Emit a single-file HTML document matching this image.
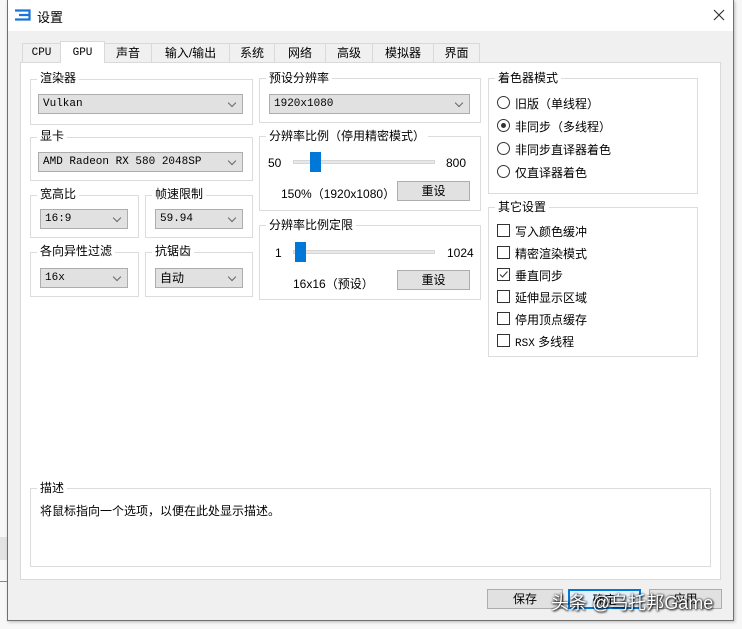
<!DOCTYPE html>
<html><head><meta charset="utf-8">
<style>
*{box-sizing:border-box;margin:0;padding:0}
body{width:742px;height:629px;overflow:hidden;background:#f7f7f7;font-family:"Liberation Sans","Noto Sans CJK SC",sans-serif;font-size:12px;color:#000;position:relative}
.a{position:absolute}
.win{left:7px;top:0;width:727px;height:621px;background:#f0f0f0;border:1px solid #707070;border-top:none;box-shadow:1px 1px 3px rgba(0,0,0,.25)}
.title{left:8px;top:0;width:725px;height:31px;background:#fff}
.panel{left:20px;top:62px;width:701px;height:518px;background:#fff;border:1px solid #d9d9d9}
.tab{top:43px;height:20px;background:#f0f0f0;border:1px solid #d9d9d9;border-bottom:none;text-align:center;line-height:18px;font-size:12px}
.tab.sel{top:41px;height:22px;background:#fff;z-index:2}
.gb{border:1px solid #dcdcdc}
.lbl{background:#fff;padding:0 3px;line-height:14px}
.cb{height:20px;background:#e1e1e1;border:1px solid #adadad;font-family:"Liberation Mono","Noto Sans CJK SC",monospace;font-size:11px;line-height:18px;padding-left:4px}
.cb.cjk{font-family:"Liberation Sans","Noto Sans CJK SC",sans-serif;font-size:12px}
.cb:after{content:"";position:absolute;right:7px;top:5px;width:5px;height:5px;border-right:1px solid #666;border-bottom:1px solid #666;transform:rotate(45deg)}
.btn{height:20px;background:#e1e1e1;border:1px solid #adadad;text-align:center;line-height:18px}
.track{height:4px;background:#e7e7e7;border:1px solid #d6d6d6}
.thumb{width:11px;height:20px;background:#0078d7}
.rad{width:13px;height:13px;border:1px solid #333;border-radius:50%;background:#fff}
.chk{width:13px;height:13px;border:1px solid #333;background:#fff}
</style></head><body>
<div class="a" style="left:0;top:537px;width:8px;height:23px;background:#e3e3e3"></div>
<div class="a" style="left:0;top:581px;width:8px;height:1px;background:#888"></div>
<div class="a win"></div>
<div class="a title"></div>
<svg class="a" style="left:14px;top:9px" width="18" height="12"><path d="M1 1.5H15.5V10.5H1M5 6H15" stroke="#1a73d9" stroke-width="2.2" fill="none"/></svg>
<div class="a" style="left:37px;top:7px;font-size:13px">设置</div>
<svg class="a" style="left:713px;top:9px" width="12" height="12"><path d="M1 1L11 11M11 1L1 11" stroke="#333" stroke-width="1.2"/></svg>

<div class="a tab" style="left:22px;width:39px;font-family:'Liberation Mono',monospace;font-size:11px">CPU</div>
<div class="a tab sel" style="left:60px;width:45px;font-family:'Liberation Mono',monospace;font-size:11px;line-height:22px">GPU</div>
<div class="a tab" style="left:104px;width:48px">声音</div>
<div class="a tab" style="left:151px;width:79px">输入/输出</div>
<div class="a tab" style="left:229px;width:46px">系统</div>
<div class="a tab" style="left:274px;width:52px">网络</div>
<div class="a tab" style="left:325px;width:48px">高级</div>
<div class="a tab" style="left:372px;width:62px">模拟器</div>
<div class="a tab" style="left:433px;width:47px">界面</div>
<div class="a panel"></div>

<!-- left column -->
<div class="a gb" style="left:30px;top:79px;width:223px;height:46px"></div>
<div class="a lbl" style="left:37px;top:71px">渲染器</div>
<div class="a cb" style="left:38px;top:94px;width:205px">Vulkan</div>

<div class="a gb" style="left:30px;top:137px;width:223px;height:44px"></div>
<div class="a lbl" style="left:37px;top:129px">显卡</div>
<div class="a cb" style="left:38px;top:152px;width:205px">AMD Radeon RX 580 2048SP</div>

<div class="a gb" style="left:30px;top:195px;width:109px;height:43px"></div>
<div class="a lbl" style="left:37px;top:187px">宽高比</div>
<div class="a cb" style="left:40px;top:209px;width:88px">16:9</div>
<div class="a gb" style="left:145px;top:195px;width:108px;height:43px"></div>
<div class="a lbl" style="left:152px;top:187px">帧速限制</div>
<div class="a cb" style="left:155px;top:209px;width:88px">59.94</div>

<div class="a gb" style="left:30px;top:252px;width:109px;height:45px"></div>
<div class="a lbl" style="left:37px;top:244px">各向异性过滤</div>
<div class="a cb" style="left:40px;top:268px;width:88px">16x</div>
<div class="a gb" style="left:145px;top:252px;width:108px;height:45px"></div>
<div class="a lbl" style="left:152px;top:244px">抗锯齿</div>
<div class="a cb cjk" style="left:155px;top:268px;width:88px">自动</div>

<!-- middle -->
<div class="a gb" style="left:259px;top:78px;width:222px;height:45px"></div>
<div class="a lbl" style="left:266px;top:71px">预设分辨率</div>
<div class="a cb" style="left:269px;top:94px;width:201px">1920x1080</div>

<div class="a gb" style="left:259px;top:136px;width:222px;height:75px"></div>
<div class="a lbl" style="left:266px;top:129px">分辨率比例（停用精密模式）</div>
<div class="a" style="left:268px;top:156px">50</div>
<div class="a track" style="left:293px;top:160px;width:142px"></div>
<div class="a thumb" style="left:310px;top:152px"></div>
<div class="a" style="left:446px;top:156px">800</div>
<div class="a" style="left:281px;top:185px">150%（1920x1080）</div>
<div class="a btn" style="left:397px;top:181px;width:73px">重设</div>

<div class="a gb" style="left:259px;top:225px;width:222px;height:75px"></div>
<div class="a lbl" style="left:266px;top:218px">分辨率比例定限</div>
<div class="a" style="left:275px;top:246px">1</div>
<div class="a track" style="left:293px;top:250px;width:142px"></div>
<div class="a thumb" style="left:295px;top:242px"></div>
<div class="a" style="left:447px;top:246px">1024</div>
<div class="a" style="left:293px;top:275px">16x16（预设）</div>
<div class="a btn" style="left:397px;top:270px;width:73px">重设</div>

<!-- right -->
<div class="a gb" style="left:488px;top:78px;width:210px;height:116px"></div>
<div class="a lbl" style="left:495px;top:71px">着色器模式</div>
<div class="a rad" style="left:497px;top:96px"></div><div class="a" style="left:515px;top:95px">旧版（单线程）</div>
<div class="a rad" style="left:497px;top:119px"></div><div class="a" style="left:501px;top:123px;width:5px;height:5px;border-radius:50%;background:#333"></div><div class="a" style="left:515px;top:118px">非同步（多线程）</div>
<div class="a rad" style="left:497px;top:142px"></div><div class="a" style="left:515px;top:141px">非同步直译器着色</div>
<div class="a rad" style="left:497px;top:165px"></div><div class="a" style="left:515px;top:164px">仅直译器着色</div>

<div class="a gb" style="left:488px;top:207px;width:210px;height:150px"></div>
<div class="a lbl" style="left:495px;top:200px">其它设置</div>
<div class="a chk" style="left:497px;top:224px"></div><div class="a" style="left:515px;top:223px">写入颜色缓冲</div>
<div class="a chk" style="left:497px;top:246px"></div><div class="a" style="left:515px;top:245px">精密渲染模式</div>
<div class="a chk" style="left:497px;top:268px"></div><svg class="a" style="left:497px;top:268px" width="13" height="13"><path d="M3 6.5L5.5 9L10.5 3.5" stroke="#333" fill="none"/></svg><div class="a" style="left:515px;top:267px">垂直同步</div>
<div class="a chk" style="left:497px;top:290px"></div><div class="a" style="left:515px;top:289px">延伸显示区域</div>
<div class="a chk" style="left:497px;top:312px"></div><div class="a" style="left:515px;top:311px">停用顶点缓存</div>
<div class="a chk" style="left:497px;top:334px"></div><div class="a" style="left:515px;top:333px"><span style="font-family:'Liberation Mono',monospace;font-size:11px">RSX</span> 多线程</div>

<!-- description -->
<div class="a gb" style="left:30px;top:488px;width:681px;height:79px"></div>
<div class="a lbl" style="left:37px;top:481px">描述</div>
<div class="a" style="left:40px;top:502px">将鼠标指向一个选项，以便在此处显示描述。</div>

<!-- bottom buttons -->
<div class="a btn" style="left:487px;top:589px;width:76px">保存</div>
<div class="a btn" style="left:568px;top:589px;width:73px;border:2px solid #0078d7;background:#e5f1fb">确定</div>
<div class="a btn" style="left:649px;top:589px;width:73px">应用</div>
<div class="a" style="left:551px;top:589px;font-size:18px;color:#fff;text-shadow:0 0 2px #000,1px 1px 2px #000;white-space:nowrap">头条 @乌托邦Game</div>
</body></html>
